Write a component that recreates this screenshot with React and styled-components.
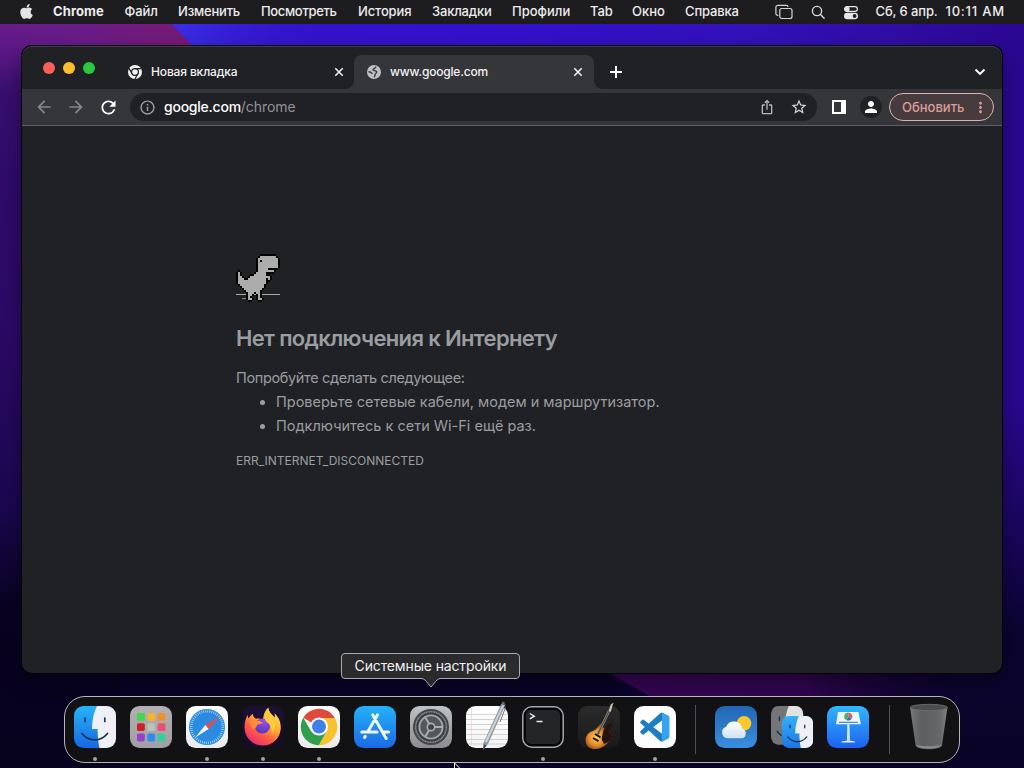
import React from "react";
import styled, { createGlobalStyle } from "styled-components";
import { FaApple } from "react-icons/fa";
import {
  MdArrowBack,
  MdArrowForward,
  MdRefresh,
  MdInfoOutline,
  MdIosShare,
  MdStarBorder,
  MdPerson,
  MdMoreVert,
} from "react-icons/md";

const Global = createGlobalStyle`
  *, *::before, *::after { box-sizing: border-box; }
  html, body { margin: 0; padding: 0; }
  body {
    width: 1024px;
    height: 768px;
    overflow: hidden;
    font-family: Inter, "Liberation Sans", sans-serif;
    background: #0b0426;
  }
  svg { display: block; flex-shrink: 0; }
`;

const Desktop = styled.main`
  position: relative;
  display: flex;
  flex-direction: column;
  width: 1024px;
  height: 768px;
  overflow: hidden;
  background:
    linear-gradient(180deg, #0a042600 0, #0a042600 400px, #0b0430aa 560px, #0b0430 630px, #0b042c 700px, #090326 768px),
    linear-gradient(90deg, #3517cf 0, #3410cc 500px, #3211b8 760px, #2f0da4 900px, #2a0790 1024px);
`;

const Wallpaper = styled.svg`
  position: absolute;
  inset: 0;
`;

const MenuBar = styled.header`
  position: relative;
  display: flex;
  align-items: center;
  flex: none;
  height: 24px;
  padding: 0 0 1px 20px;
  background: #1d1c1e;
  color: #ededee;
  font-size: 13px;
  font-weight: 500;
`;

const AppleSlot = styled.span`
  width: 33px;
  font-size: 17px;
  color: #e4e4e6;
  svg { margin-left: -2px; }
`;

const MenuItem = styled.span`
  flex: none;
  width: ${(p) => p.$w}px;
  padding-bottom: 1px;
  white-space: nowrap;
  font-weight: ${(p) => (p.$bold ? 700 : 500)};
  letter-spacing: ${(p) => p.$ls || 0}px;
`;

const StatusIcon = styled.span`
  flex: none;
  display: flex;
  width: ${(p) => p.$w}px;
  padding-top: 1px;
`;

const Browser = styled.section`
  position: relative;
  display: flex;
  flex-direction: column;
  flex: none;
  width: 980px;
  height: 627px;
  margin: 22px 0 0 22px;
  border-radius: 10px;
  background: #202124;
  box-shadow: 0 0 0 1px #050509, inset 0 1px 0 #3c3c40, 0 8px 22px rgba(0, 0, 0, 0.4);
  overflow: hidden;
`;

const TabStrip = styled.div`
  display: flex;
  flex: none;
  height: 43px;
  padding-left: 21px;
`;

const Lights = styled.div`
  display: flex;
  gap: 8px;
  width: 72px;
  padding-top: 16px;
`;

const Light = styled.span`
  width: 12px;
  height: 12px;
  border-radius: 50%;
  background: ${(p) => p.$c};
`;

const Tab = styled.div`
  position: relative;
  display: flex;
  align-items: center;
  width: ${(p) => (p.$active ? 240 : 239)}px;
  height: 34px;
  margin-top: 9px;
  padding: 0 ${(p) => (p.$active ? 11 : 10)}px 0 13px;
  border-radius: 8px 8px 0 0;
  background: ${(p) => (p.$active ? "#35363a" : "transparent")};
  color: #f3f3f4;
  font-size: 12px;
  font-weight: 500;
  &::before, &::after {
    content: "";
    display: ${(p) => (p.$active ? "block" : "none")};
    position: absolute;
    bottom: 0;
    width: 8px;
    height: 8px;
  }
  &::before { left: -8px; background: radial-gradient(circle at 0 0, transparent 7.5px, #35363a 8px); }
  &::after { right: -8px; background: radial-gradient(circle at 100% 0, transparent 7.5px, #35363a 8px); }
`;

const Favicon = styled.span`
  display: flex;
  justify-content: center;
  width: 14px;
  margin-right: 9px;
`;

const TabTitle = styled.span`
  flex: 1;
  padding-bottom: 2px;
  white-space: nowrap;
  letter-spacing: ${(p) => p.$ls || 0}px;
`;

const StripButton = styled.span`
  display: flex;
  align-items: center;
  justify-content: center;
  width: 28px;
  height: 34px;
  margin: 9px 0 0 ${(p) => p.$ml || 0}px;
`;

const Toolbar = styled.div`
  display: flex;
  align-items: center;
  flex: none;
  height: 37px;
  padding: 0 0 0 6px;
  background: #35363a;
  border-bottom: 1px solid #5d5f62;
`;

const ToolSlot = styled.span`
  display: flex;
  align-items: center;
  justify-content: center;
  width: 32px;
  height: 28px;
  font-size: ${(p) => p.$size || 20}px;
  color: ${(p) => p.$c || "#fff"};
`;

const Omnibox = styled.div`
  display: flex;
  align-items: center;
  width: 687px;
  height: 28px;
  margin: 0 6px;
  padding: 0 2px 0 9px;
  border-radius: 14px;
  background: #202124;
`;

const InfoSlot = styled.span`
  width: 25px;
  font-size: 17px;
  color: #9aa0a6;
`;

const Url = styled.span`
  flex: 1;
  padding-bottom: 1px;
  font-size: 14px;
  letter-spacing: -0.05px;
  color: #919397;
`;

const Host = styled.span`
  color: #fff;
  font-weight: 500;
  letter-spacing: -0.24px;
`;

const Avatar = styled.span`
  display: flex;
  align-items: center;
  justify-content: center;
  width: 22px;
  height: 22px;
  border-radius: 50%;
  background: #202124;
  font-size: 18px;
  color: #fff;
`;

const UpdateButton = styled.button`
  display: flex;
  align-items: center;
  justify-content: space-between;
  width: 105px;
  height: 28px;
  margin: 0 0 0 2px;
  padding: 0 4px 0 12px;
  border: 1px solid #d9b4b1;
  border-radius: 14px;
  background: #483b3e;
  color: #d99f99;
  font: 500 13px Inter, sans-serif;
`;

const Page = styled.article`
  flex: 1;
  padding: 128px 0 0 214px;
  color: #9a9da1;
`;

const Heading = styled.h1`
  margin: 21px 0 0;
  font-size: 22px;
  font-weight: 600;
  line-height: 30px;
  white-space: nowrap;
  letter-spacing: -0.66px;
`;

const Lead = styled.p`
  margin: 13px 0 0;
  font-size: 14.5px;
  line-height: 24px;
  letter-spacing: -0.36px;
`;

const Tips = styled.ul`
  margin: 0;
  padding: 0 0 0 40px;
  font-size: 14.5px;
  line-height: 24px;
`;

const ErrorCode = styled.p`
  margin: 13px 0 0;
  font-size: 12px;
  line-height: 20px;
`;

const Dock = styled.nav`
  position: relative;
  display: flex;
  flex: none;
  width: 896px;
  height: 67px;
  margin: 23px 0 0 64px;
  padding: 0 2px;
  border: 1px solid #b5b4bb;
  border-radius: 21px;
  background: #121214;
`;

const DockSlot = styled.div`
  display: flex;
  flex-direction: column;
  align-items: center;
  width: 56px;
  padding-top: 9px;
`;

const Dot = styled.span`
  width: 4px;
  height: 4px;
  margin-top: 9px;
  border-radius: 50%;
  background: #a4a4a6;
`;

const Divider = styled.div`
  width: ${(p) => p.$w}px;
  padding: 8px 0 0 ${(p) => p.$inset}px;
  &::before {
    content: "";
    display: block;
    width: 1px;
    height: 49px;
    background: #505052;
  }
`;

const Tooltip = styled.div`
  position: absolute;
  left: 341px;
  top: 653px;
  width: 179px;
  height: 26px;
  border: 1px solid #a9a9ac;
  border-radius: 4px;
  background: #2b2b2d;
  color: #f0f0f1;
  font-size: 14px;
  line-height: 24px;
  text-align: center;
  letter-spacing: -0.14px;
`;

const TooltipArrow = styled.svg`
  position: absolute;
  left: 78px;
  top: 23px;
`;

const Pointer = styled.svg`
  position: absolute;
  left: 453px;
  top: 762px;
`;

function CrossIcon() {
  return (
    <svg width="10" height="10" viewBox="0 0 10 10" stroke="#f0f0f0" strokeWidth="1.6" fill="none">
      <path d="M1.3 1.3 8.7 8.7M8.7 1.3 1.3 8.7" />
    </svg>
  );
}

function MonoChromeIcon() {
  return (
    <svg width="14" height="14" viewBox="0 0 14 14">
      <circle cx="7" cy="7" r="7" fill="#f4f4f5" />
      <circle cx="7" cy="7" r="3.400" fill="none" stroke="#202124" strokeWidth="1.200" />
      <path d="M7 3.600h6.200M4.060 8.700 1 3.400M9.940 8.700 6.900 14" stroke="#202124" strokeWidth="1.200" />
    </svg>
  );
}

function GlobeIcon() {
  return (
    <svg width="14" height="14" viewBox="0 0 14 14">
      <circle cx="7" cy="7" r="7" fill="#bfc0c2" />
      <path
        d="M8.800 2c-.2 1.600-2.700 1.100-2.700 2.700 0 1.200 3 .5 3.500 2.100.4 1.500-1.300 1.700-1.500 2.700-.2.900-.1 1.500-.7 2.100M2 6.800C3.200 7 4.300 7.300 5 8.400"
        fill="none"
        stroke="#3b3c40"
        strokeWidth="1.500"
        strokeLinecap="round"
      />
    </svg>
  );
}

function WindowsIcon() {
  return (
    <svg width="18" height="16" viewBox="0 0 18 16" fill="none" stroke="#d6d6d8" strokeWidth="1.2">
      <path d="M3.400 11.400H2.800A1.900 1.900 0 0 1 .900 9.500V3.200A1.900 1.900 0 0 1 2.800 1.300H11.200A1.900 1.900 0 0 1 13.100 3" />
      <rect x="4.800" y="4.500" width="12.200" height="10" rx="2" />
    </svg>
  );
}

function SearchIcon() {
  return (
    <svg width="15" height="15" viewBox="0 0 15 15" fill="none" stroke="#d9d9db" strokeWidth="1.4" strokeLinecap="round">
      <circle cx="6" cy="6" r="4.600" />
      <path d="m9.500 9.500 3.600 3.700" />
    </svg>
  );
}

function ControlCenterIcon() {
  return (
    <svg width="16" height="15" viewBox="0 0 16 15">
      <rect x="1.600" y="1.600" width="12.800" height="4.800" rx="2.400" fill="none" stroke="#e6e6e8" strokeWidth="1.200" />
      <circle cx="4" cy="4" r="2.600" fill="#e6e6e8" />
      <rect x="1" y="7.800" width="14" height="6.400" rx="3.200" fill="#e6e6e8" />
      <circle cx="11.600" cy="11" r="1.900" fill="#1d1c1e" />
    </svg>
  );
}

/* Two-pixel cells of the offline dinosaur, top row first. */
const DINO = [
  "...........########.",
  "..........##########",
  "..........#.########",
  "..........##########",
  "..........##########",
  "..........##########",
  "..........#####.....",
  "..........########..",
  "#........#####......",
  "#.......######......",
  "##....##########....",
  "###..#########.#....",
  "##############......",
  "##############......",
  ".############.......",
  "..###########.......",
  "...#########........",
  "....#######.........",
  ".....###.##.........",
  ".....##...#.........",
  ".....#....#.........",
  ".....##...##........",
];

function Dino() {
  const cells = [];
  DINO.forEach((row, y) => {
    [...row].forEach((c, x) => {
      if (c === "#") cells.push([x * 2 + 2, y * 2 + 2]);
    });
  });
  return (
    <svg width="44" height="48" viewBox="0 0 44 48" shapeRendering="crispEdges">
      <path d="M0 40h44v1H0z" fill="#a9abad" />
      <path d="M6 44h5v1H6z" fill="#85878a" />
      {cells.map(([x, y]) => (
        <path key={`o${x}-${y}`} d={`M${x - 2} ${y}h6v2h-6zM${x} ${y - 2}h2v6h-2z`} fill="#000" />
      ))}
      {cells.map(([x, y]) => (
        <rect key={`b${x}-${y}`} x={x} y={y} width="2" height="2" fill="#acacad" />
      ))}
    </svg>
  );
}

function Tile({ id, from, to, children }) {
  return (
    <svg width="42" height="42" viewBox="0 0 42 42" overflow="visible">
      <defs>
        <linearGradient id={id} x1="0" y1="0" x2="0" y2="1">
          <stop offset="0" stopColor={from} />
          <stop offset="1" stopColor={to} />
        </linearGradient>
        <clipPath id={`${id}-clip`}>
          <rect width="42" height="42" rx="9.500" />
        </clipPath>
      </defs>
      <rect width="42" height="42" rx="9.500" fill={`url(#${id})`} />
      {children}
    </svg>
  );
}

function FinderFace({ id, light = "#eef0f6" }) {
  return (
    <g clipPath={`url(#${id}-clip)`}>
      <path d="M23 0H42V42H25.500C24.200 36 23.600 29.500 23.600 23H18C18 14.500 19.700 6.500 23 0Z" fill={light} />
      <path d="M11 12v3.500M30.800 12v3.500" stroke="#143455" strokeWidth="1.700" strokeLinecap="round" />
      <path d="M8 27.500c7 8.500 18.500 8.500 25.500 0" fill="none" stroke="#17304a" strokeWidth="1.700" strokeLinecap="round" />
    </g>
  );
}

function FinderIcon() {
  return (
    <Tile id="finder" from="#27b4f8" to="#1668e2">
      <FinderFace id="finder" />
    </Tile>
  );
}

function LaunchpadIcon() {
  const colors = ["#3ed653", "#f3b62a", "#f0902a", "#cf2023", "#b5c4b8", "#ee4c70", "#9343c9", "#2d8cf0", "#35cf9c"];
  return (
    <Tile id="launchpad" from="#b3b0b2" to="#a19fa3">
      {colors.map((c, i) => (
        <rect key={c} x={7 + (i % 3) * 10.300} y={7 + Math.floor(i / 3) * 10.300} width="7.800" height="7.800" rx="1.600" fill={c} />
      ))}
    </Tile>
  );
}

function SafariIcon() {
  return (
    <Tile id="safari" from="#ffffff" to="#e9eaec">
      <circle cx="21" cy="21" r="18" fill="#2a8be0" />
      <circle cx="21" cy="21" r="15.800" fill="none" stroke="#b9d9f4" strokeWidth="2.600" strokeDasharray=".7 1.368" />
      <path d="M33.800 10.500 19.300 19 22.600 23Z" fill="#ea4b46" />
      <path d="M9.300 31.500 19.300 19 22.600 23Z" fill="#f3f5f7" />
    </Tile>
  );
}

function FirefoxIcon() {
  return (
    <Tile id="firefox" from="#1b1036" to="#150c24">
      <defs>
        <linearGradient id="flame" x1=".85" y1=".05" x2=".25" y2="1">
          <stop offset="0" stopColor="#ffe04a" />
          <stop offset=".38" stopColor="#ffae35" />
          <stop offset=".68" stopColor="#ff5a45" />
          <stop offset="1" stopColor="#e62a72" />
        </linearGradient>
        <radialGradient id="orb" cx=".6" cy=".2" r=".9">
          <stop offset="0" stopColor="#a04af0" />
          <stop offset="1" stopColor="#4b36b4" />
        </radialGradient>
      </defs>
      <path d="M5.600 8.500C5.800 11 6 11.500 6.600 12.600 7.500 10.500 9 9 10.800 8c.2 2.400 1.400 3.800 3.200 4.700 2.600-.6 5 .1 7 1.300.2-5.500 2-9.500 5.200-12.300.5 4.400 3.800 6.800 6.400 9.800.4-1.400.2-2.800-.2-4.300 5 4.500 6.800 9.800 6.300 16.100C37.800 32.600 30.600 39.500 21 39.500 11.200 39.500 3.300 32.200 2.600 22.800 2.200 17.800 3.400 13.200 5.600 8.500Z" fill="url(#flame)" />
      <circle cx="20.400" cy="20" r="7.600" fill="url(#orb)" />
      <path d="M8.500 15.200c4.500-1.800 8.500-1 12.200 1.300-1 1.500-3 2-5.500 2.300-.2 2.500-2.200 2.500-2.600 4.800C9.500 21.500 8.300 18.500 8.500 15.200Z" fill="#ff8b38" />
      <path d="M26.200 1.700c.5 4.400 3.800 6.800 6.400 9.800 1.600 6.500 1.100 12.500-3.200 17 .9-6.800-.5-9.500-5-12.800-2.500-2.600-2.200-9 1.800-14Z" fill="#ffc93c" />
    </Tile>
  );
}

function ChromeIcon() {
  return (
    <Tile id="chrome" from="#fbfbfb" to="#ecebea">
      <path d="M21 21 5.300 11.800A18.200 18.200 0 0 1 36.800 12Z" fill="#e04a3c" />
      <path d="M21 12H36.800A18.200 18.200 0 0 1 20.800 39.200L29 25.500Z" fill="#f7c22c" />
      <path d="M13.200 25.500 5.300 11.800A18.200 18.200 0 0 0 20.800 39.200L28.600 25.500Z" fill="#2f9e4d" />
      <circle cx="21" cy="20.600" r="9" fill="#fff" />
      <circle cx="21" cy="20.600" r="7" fill="#3f7fe8" />
    </Tile>
  );
}

function AppStoreIcon() {
  return (
    <Tile id="appstore" from="#25b2f8" to="#1b69e4">
      <g stroke="#eef7ff" strokeWidth="3" strokeLinecap="round" fill="none">
        <path d="M18.700 8.700 30.600 29.800M23.600 8.700 13.800 25.800M11.300 30.300l-.7 1.200M7.800 26h15.200M29 26h5.500M31.700 31.600l.5.900" />
      </g>
    </Tile>
  );
}

function SettingsIcon() {
  return (
    <Tile id="settings" from="#bcc3c3" to="#8b8d90">
      <circle cx="21" cy="21" r="18" fill="#43474a" />
      <circle cx="21" cy="21" r="15.300" fill="#3b3f41" stroke="#8c9294" strokeWidth="1.500" strokeDasharray="1.200 .5" />
      <circle cx="21" cy="21" r="11.600" fill="#54585a" stroke="#a2a8aa" strokeWidth="1.900" />
      <path d="M23 21h10M20 19.300 15 10.900M20 22.700 15 31.100" stroke="#a9afb1" strokeWidth="2" />
      <circle cx="21" cy="21" r="3.700" fill="#3c4042" stroke="#a9afb1" strokeWidth="1.700" />
    </Tile>
  );
}

function TextEditIcon() {
  return (
    <Tile id="textedit" from="#ffffff" to="#f3f3f3">
      <path d="M1 8.500h40M0 13.500h42M0 18.500h42M0 23.500h42M0 28.500h42M0 33.500h42M3 38h36" stroke="#c7c8ca" strokeWidth=".8" />
      <path d="M5.500 2v38" stroke="#ecc9c5" strokeWidth=".6" />
      <path d="m35.500-2.500 4 1.200L22 38l-4.800 6 .4-7.500Z" fill="#8d979e" />
      <path d="m36.500-1.500 1.700.5L21 36.500l-2.300-.8Z" fill="#cbd3d8" />
      <path d="m36.300-4.500 2.600.8-.8 3-2.600-.9Z" fill="#5d686f" />
      <path d="m17.700 38.500 2.500.8-3 4.700Z" fill="#394247" />
      <path d="M39.500 1.500 34 16" stroke="#6c767c" strokeWidth="1" />
    </Tile>
  );
}

function TerminalIcon() {
  return (
    <svg width="42" height="42" viewBox="0 0 42 42">
      <rect x=".8" y=".8" width="40.400" height="40.400" rx="9" fill="#050505" stroke="#a6a7a8" strokeWidth="1.500" />
      <rect x="4" y="4" width="34" height="34" rx="5" fill="#242526" />
      <path d="m7.800 7.500 4.500 2.700-4.500 2.700M14.500 15.500h6" fill="none" stroke="#ececec" strokeWidth="1.400" />
    </svg>
  );
}

function GuitarIcon() {
  return (
    <Tile id="guitar" from="#2b2b2c" to="#191919">
      <defs>
        <radialGradient id="burst" cx=".42" cy=".55" r=".62">
          <stop offset="0" stopColor="#ffd15c" />
          <stop offset=".5" stopColor="#e58a2c" />
          <stop offset="1" stopColor="#58200f" />
        </radialGradient>
      </defs>
      <path d="M22.500 17.500c-3 3.500-3.500 5.500-6.500 7-5.500 1.500-8.700 5-8.400 10.500.4 6 5 8.500 10.400 8 6-.6 9.500-3.200 11.800-6.500 2.600-1.600 4-3 4.100-5.800 0-2.700-2.600-3.500-2.500-5.700 0-2.300 3-3.500 2.300-6.300-3.200.5-4.300 3.500-7 4.200-1.800-.8-2-3.700-4.200-5.400Z" fill="url(#burst)" />
      <path d="M33.500 16.500c-4.500 2.500-5.500 5.500-8 7.500l-2 9 2.500 5c4-2 8-3.500 8-7.300 0-2.700-2.700-3.500-2.700-5.300 0-2.300 4.700-5.500 2.200-8.900Z" fill="#26130e" />
      <path d="M19.500 29 31 5" stroke="#8f8576" strokeWidth="2.600" />
      <path d="M20 28 31 5" stroke="#37302b" strokeWidth=".8" />
      <path d="m30.500 5 2.200-6.500 3-2-1 2.500-2 7Z" fill="#c9c0ad" />
      <path d="m17 28 5.500 3.300M15 32l5.500 3.200" stroke="#20130d" strokeWidth="2" />
    </Tile>
  );
}

function CodeIcon() {
  return (
    <Tile id="code" from="#ffffff" to="#fdfdfd">
      <g transform="translate(6.200 6.600) scale(1.210)">
        <path
          d="M23.150 2.587 18.210.210a1.494 1.494 0 0 0-1.705.290l-9.460 8.630-4.120-3.128a.999.999 0 0 0-1.276.057L.327 7.261A1 1 0 0 0 .326 8.740L3.899 12 .326 15.260a1 1 0 0 0 .001 1.479L1.650 17.940a.999.999 0 0 0 1.276.057l4.120-3.128 9.460 8.630a1.492 1.492 0 0 0 1.704.290l4.942-2.377A1.500 1.500 0 0 0 24 20.060V3.939a1.500 1.500 0 0 0-.850-1.352zm-5.146 14.861L10.826 12l7.178-5.448v10.896z"
          fill="#1d7cc4"
        />
        <path d="M18 .150 23.150 2.587A1.500 1.500 0 0 1 24 3.939V20.060a1.500 1.500 0 0 1-.850 1.352L18 23.850Z" fill="#35a3ee" />
      </g>
    </Tile>
  );
}

function WeatherIcon() {
  return (
    <Tile id="weather" from="#2266b4" to="#3a8edf">
      <defs>
        <linearGradient id="cloud" x1="0" y1="0" x2="0" y2="1">
          <stop offset="0" stopColor="#ffffff" />
          <stop offset="1" stopColor="#cfe2f6" />
        </linearGradient>
      </defs>
      <circle cx="29" cy="17.300" r="7.300" fill="#fdc82e" />
      <path d="M12.500 32.200a5.900 5.900 0 0 1-1.300-11.500 8.300 8.300 0 0 1 15.900 1.800 5 5 0 0 1-.2 9.700Z" fill="url(#cloud)" />
    </Tile>
  );
}

function MigrationIcon() {
  return (
    <svg width="42" height="42" viewBox="0 0 42 42">
      <defs>
        <linearGradient id="pairBlue" x1="0" y1="0" x2="0" y2="1">
          <stop offset="0" stopColor="#35b1f5" />
          <stop offset="1" stopColor="#1c76e6" />
        </linearGradient>
        <clipPath id="pair-clip">
          <rect width="42" height="42" rx="9.500" />
        </clipPath>
      </defs>
      <g transform="scale(.77 .92)">
        <rect width="42" height="42" rx="9" fill="#737577" />
        <FinderFace id="pair" light="#e0e1e3" />
      </g>
      <g transform="translate(10.800 10) scale(.745 .76)">
        <rect width="42" height="42" rx="9.500" fill="url(#pairBlue)" />
        <FinderFace id="pair" />
      </g>
    </svg>
  );
}

function KeynoteIcon() {
  return (
    <Tile id="keynote" from="#31b6fb" to="#1b62f0">
      <path d="M11 6h20.500l2.300 12.300H9Z" fill="#eef6ff" />
      <path d="M12 16.300h18.800" stroke="#2f6fa8" strokeWidth="1" />
      <path d="M21.300 10.500V6.500a4 4 0 0 1 3.500 6Z" fill="#ef5a4a" />
      <path d="M21.300 10.500 24.800 12.500a4 4 0 0 1-5.500 1.500Z" fill="#3478c9" />
      <path d="M21.300 10.500l-2 3.500A4 4 0 0 1 21.300 6.500Z" fill="#54b05c" />
      <path d="M20.300 18.300h2.200l.4 16.500h-3Z" fill="#d6e9fb" />
      <path d="M14.500 35.500c2-1 11.500-1 13.500 0v1H14.500Z" fill="#e4f1fd" />
    </Tile>
  );
}

function TrashIcon() {
  return (
    <svg width="42" height="42" viewBox="0 0 42 42" overflow="visible">
      <defs>
        <linearGradient id="bin" x1="0" y1="0" x2="1" y2="0">
          <stop offset="0" stopColor="#77797b" />
          <stop offset=".3" stopColor="#5c5e60" />
          <stop offset=".8" stopColor="#66686a" />
          <stop offset="1" stopColor="#808284" />
        </linearGradient>
      </defs>
      <path d="M3 1 8.500 39c.6 5.800 25.900 5.800 26.500 0L40.500 1Z" fill="url(#bin)" />
      <ellipse cx="21.800" cy="1.500" rx="18.700" ry="3.200" fill="#4b4d4f" stroke="#727476" strokeWidth=".8" />
      <path d="M9 38.500c3 2.400 23 2.400 25.500 0-1 5.500-24.500 5.500-25.500 0Z" fill="#8b8d8f" />
    </svg>
  );
}

const MENU = [
  ["Файл", 53.500, -0.1],
  ["Изменить", 83, -0.2],
  ["Посмотреть", 97, -0.34],
  ["История", 74, -0.15],
  ["Закладки", 80, -0.2],
  ["Профили", 78, 0],
  ["Tab", 42, -0.1],
  ["Окно", 53, 0],
  ["Справка", 90, -0.15],
];

const APPS = [
  ["finder", FinderIcon, true],
  ["launchpad", LaunchpadIcon, false],
  ["safari", SafariIcon, true],
  ["firefox", FirefoxIcon, true],
  ["chrome", ChromeIcon, true],
  ["appstore", AppStoreIcon, false],
  ["settings", SettingsIcon, false],
  ["textedit", TextEditIcon, false],
  ["terminal", TerminalIcon, true],
  ["guitar", GuitarIcon, false],
  ["code", CodeIcon, true],
];

const RECENT = [
  ["weather", WeatherIcon],
  ["migration", MigrationIcon],
  ["keynote", KeynoteIcon],
];

export default function App() {
  return (
    <Desktop>
      <Global />
      <Wallpaper width="1024" height="768" viewBox="0 0 1024 768" aria-hidden="true">
        <defs>
          <linearGradient id="leftSky" x1="0" y1="24" x2="0" y2="768" gradientUnits="userSpaceOnUse">
            <stop offset="0" stopColor="#651c8c" />
            <stop offset=".05" stopColor="#541680" />
            <stop offset=".09" stopColor="#380f70" />
            <stop offset=".2" stopColor="#300b6c" />
            <stop offset=".45" stopColor="#2a0964" />
            <stop offset=".65" stopColor="#1a0750" />
            <stop offset=".78" stopColor="#090322" />
            <stop offset="1" stopColor="#07021e" />
          </linearGradient>
          <linearGradient id="magenta" x1="0" y1="0" x2="200" y2="0" gradientUnits="userSpaceOnUse">
            <stop offset="0" stopColor="#6a1d86" stopOpacity="0" />
            <stop offset=".3" stopColor="#661c8a" />
            <stop offset="1" stopColor="#781a74" />
          </linearGradient>
          <linearGradient id="azure" x1="172" y1="0" x2="330" y2="0" gradientUnits="userSpaceOnUse">
            <stop offset="0" stopColor="#3a30e6" />
            <stop offset="1" stopColor="#3413cc" stopOpacity="0" />
          </linearGradient>
          <linearGradient id="plum" x1="614" y1="0" x2="990" y2="0" gradientUnits="userSpaceOnUse">
            <stop offset="0" stopColor="#350653" />
            <stop offset=".5" stopColor="#30064f" />
            <stop offset="1" stopColor="#0b042c" stopOpacity="0" />
          </linearGradient>
        </defs>
        <path d="M0 24h120v744H0z" fill="url(#leftSky)" />
        <path d="M0 24h172l23 24H0z" fill="url(#magenta)" />
        <path d="M172 24h160v24H195z" fill="url(#azure)" />
        <path d="M120 660h500v108H120z" fill="#090326" />
        <path d="M600 668h400v34H660z" fill="url(#plum)" />
      </Wallpaper>

      <MenuBar>
        <AppleSlot>
          <FaApple />
        </AppleSlot>
        <MenuItem $w={71.500} $ls={0.1} $bold>Chrome</MenuItem>
        {MENU.map(([label, w, ls]) => (
          <MenuItem key={label} $w={w} $ls={ls}>{label}</MenuItem>
        ))}
        <StatusIcon $w={36}><WindowsIcon /></StatusIcon>
        <StatusIcon $w={32}><SearchIcon /></StatusIcon>
        <StatusIcon $w={32.500}><ControlCenterIcon /></StatusIcon>
        <MenuItem $w={70} $ls={-0.12}>Сб, 6 апр.</MenuItem>
        <MenuItem $w={64} $ls={0.78}>10:11 AM</MenuItem>
      </MenuBar>

      <Browser>
        <TabStrip>
          <Lights>
            <Light $c="#ff5f57" />
            <Light $c="#febc2e" />
            <Light $c="#28c840" />
          </Lights>
          <Tab>
            <Favicon><MonoChromeIcon /></Favicon>
            <TabTitle $ls={-0.14}>Новая вкладка</TabTitle>
            <CrossIcon />
          </Tab>
          <Tab $active>
            <Favicon><GlobeIcon /></Favicon>
            <TabTitle $ls={-0.18}>www.google.com</TabTitle>
            <CrossIcon />
          </Tab>
          <StripButton $ml={8}>
            <svg width="12" height="12" viewBox="0 0 12 12" stroke="#fff" strokeWidth="2">
              <path d="M6 0v12M0 6h12" />
            </svg>
          </StripButton>
          <StripButton $ml={336}>
            <svg width="12" height="8" viewBox="0 0 12 8" fill="none" stroke="#fff" strokeWidth="1.900">
              <path d="m1.500 1.500 4.500 4.500 4.500-4.500" />
            </svg>
          </StripButton>
        </TabStrip>

        <Toolbar>
          <ToolSlot $c="#85878b"><MdArrowBack /></ToolSlot>
          <ToolSlot $c="#85878b"><MdArrowForward /></ToolSlot>
          <ToolSlot $size={21}><MdRefresh /></ToolSlot>
          <Omnibox>
            <InfoSlot><MdInfoOutline /></InfoSlot>
            <Url><Host>google.com</Host>/chrome</Url>
            <ToolSlot $size={16} $c="#b4b6b9"><MdIosShare /></ToolSlot>
            <ToolSlot $size={18} $c="#d4d5d7"><MdStarBorder /></ToolSlot>
          </Omnibox>
          <ToolSlot>
            <svg width="14" height="14" viewBox="0 0 14 14">
              <path d="M0 0h14v14H0zM2 2v10h7V2z" fill="#fff" fillRule="evenodd" />
            </svg>
          </ToolSlot>
          <ToolSlot><Avatar><MdPerson /></Avatar></ToolSlot>
          <UpdateButton>
            Обновить
            <MdMoreVert size={17} />
          </UpdateButton>
        </Toolbar>

        <Page>
          <Dino />
          <Heading>Нет подключения к Интернету</Heading>
          <Lead>Попробуйте сделать следующее:</Lead>
          <Tips>
            <li>Проверьте сетевые кабели, модем и маршрутизатор.</li>
            <li>Подключитесь к сети Wi-Fi ещё раз.</li>
          </Tips>
          <ErrorCode>ERR_INTERNET_DISCONNECTED</ErrorCode>
        </Page>
      </Browser>

      <Dock>
        {APPS.map(([key, Icon, running]) => (
          <DockSlot key={key}>
            <Icon />
            {running && <Dot />}
          </DockSlot>
        ))}
        <Divider $w={25} $inset={12} />
        {RECENT.map(([key, Icon]) => (
          <DockSlot key={key}><Icon /></DockSlot>
        ))}
        <Divider $w={24} $inset={13} />
        <DockSlot><TrashIcon /></DockSlot>
      </Dock>

      <Tooltip>
        Системные настройки
        <TooltipArrow width="22" height="12" viewBox="0 0 22 12">
          <path d="M1 0h20v1.500c-3.500 0-5 2.500-6.500 4.500L11 10 7.500 6C6 4 4.500 1.500 1 1.500Z" fill="#2b2b2d" />
          <path d="M1 1.500c3.500 0 5 2.500 6.500 4.500L11 10l3.500-4c1.500-2 3-4.500 6.500-4.500" fill="none" stroke="#a9a9ac" />
        </TooltipArrow>
      </Tooltip>
      <Pointer width="10" height="8" viewBox="0 0 10 8">
        <path d="M1.500 1v9M1.500 1l7 7" fill="#000" stroke="#fff" />
        <path d="M2 2.500 7.500 8H2Z" fill="#000" />
      </Pointer>
    </Desktop>
  );
}
